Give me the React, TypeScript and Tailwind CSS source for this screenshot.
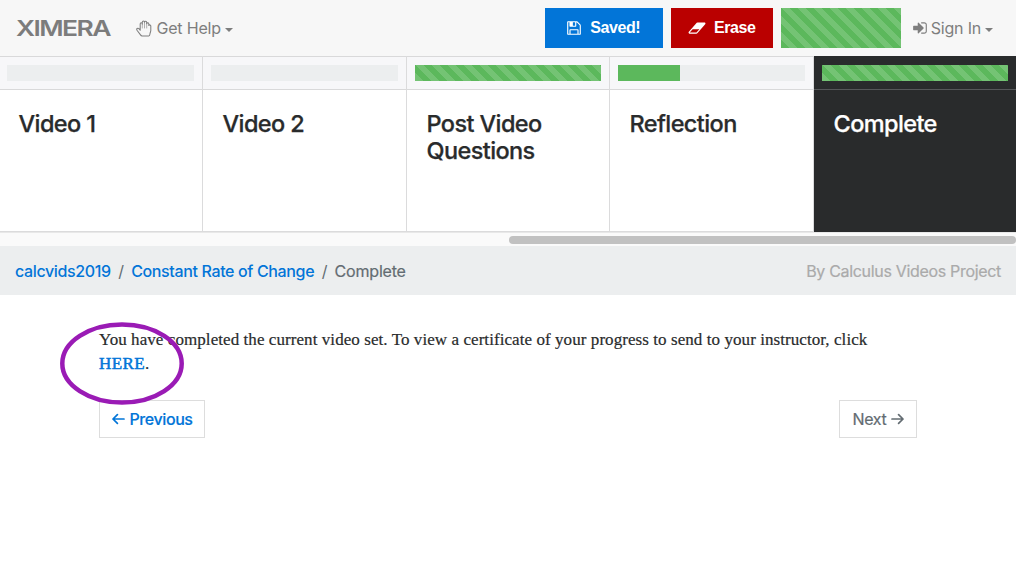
import type { ReactNode } from "react";

const stripes =
  "bg-[#5cb85c] bg-[linear-gradient(45deg,rgba(255,255,255,.15)_25%,transparent_25%,transparent_50%,rgba(255,255,255,.15)_50%,rgba(255,255,255,.15)_75%,transparent_75%,transparent)] bg-[length:16px_16px]";

function HandIcon() {
  return (
    <svg className="h-[17px] w-4" viewBox="0 0 16 17" fill="none" stroke="currentColor" strokeWidth="1.05" strokeLinejoin="round" strokeLinecap="round">
      <path d="M4.2 10.2V4.1c0-1.7 2-1.7 2.1 0V2.3c0-1.8 2.2-1.8 2.2 0 .1-1.6 2.2-1.5 2.2.3v1.1c.3-1.3 2.1-1.1 2.1.4v1.4c.5-1.1 2-.7 2 .6v4.4c0 .8-.5 1.8-.7 2.6-.2.7 0 2.8-1.3 2.8H6.1c-.8 0-1.2-.4-1.6-1L1 10.2c-.9-1.4.8-2.7 1.9-1.5l1.3 1.5" />
      <path strokeWidth=".6" d="M6.3 4v4M8.5 2.5V8M10.7 3.5V8" />
    </svg>
  );
}

function SaveIcon() {
  return (
    <svg className="size-4" viewBox="0 0 1792 1792" fill="currentColor">
      <path d="M512 1536h768v-384h-768v384zm896 0h128v-896q0-14-10-38.5t-20-34.5l-281-281q-10-10-34-20t-39-10v416q0 40-28 68t-68 28h-576q-40 0-68-28t-28-68v-416h-128v1280h128v-416q0-40 28-68t68-28h832q40 0 68 28t28 68v416zm-384-928v-320q0-13-9.5-22.5t-22.5-9.5h-192q-13 0-22.5 9.5t-9.5 22.5v320q0 13 9.5 22.5t22.5 9.5h192q13 0 22.5-9.5t9.5-22.5zm640 32v928q0 40-28 68t-68 28h-1344q-40 0-68-28t-28-68v-1344q0-40 28-68t68-28h928q40 0 88 20t76 48l280 280q28 28 48 76t20 88z" />
    </svg>
  );
}

function EraserIcon() {
  return (
    <svg className="h-4 w-[18px]" viewBox="0 0 2048 1792" fill="currentColor">
      <path d="M960 1408l336-384h-768l-336 384h768zm1013-1077q15 34 9.5 71.5t-30.5 65.5l-896 1024q-38 44-96 44h-768q-38 0-69.5-20.5t-47.5-54.5q-15-34-9.5-71.5t30.5-65.5l896-1024q38-44 96-44h768q38 0 69.5 20.5t47.5 54.5z" />
    </svg>
  );
}

function SignInIcon() {
  return (
    <svg className="size-4" viewBox="0 0 1792 1792" fill="currentColor">
      <path d="M1312 896q0 26-19 45l-544 544q-19 19-45 19t-45-19-19-45v-288h-448q-26 0-45-19t-19-45v-384q0-26 19-45t45-19h448v-288q0-26 19-45t45-19 45 19l544 544q19 19 19 45zm352-352v704q0 119-84.5 203.5t-203.5 84.5h-320q-13 0-22.5-9.5t-9.5-22.5q0-4-1-20t-.5-26.5 3-23.5 10-19.5 20.5-6.5h320q66 0 113-47t47-113v-704q0-66-47-113t-113-47h-312l-11.5-1-11.5-3-8-5.5-7-9-2-13.5q0-4-1-20t-.5-26.5 3-23.5 10-19.5 20.5-6.5h320q119 0 203.5 84.5t84.5 203.5z" />
    </svg>
  );
}

function Arrow({ flip = false }: { flip?: boolean }) {
  return (
    <svg className={flip ? "h-3 w-[13px] -scale-x-100" : "h-3 w-[13px]"} viewBox="0 0 13 12" fill="none" stroke="currentColor" strokeWidth="1.7" strokeLinecap="round" strokeLinejoin="round">
      <path d="M1 6h11M7.6 1.7 12 6l-4.4 4.3" />
    </svg>
  );
}

function Caret() {
  return <span className="mt-[3px] h-0 w-0 border-x-4 border-t-4 border-x-transparent border-t-current" />;
}

function Card({ title, percent, active = false }: { title: string; percent: number; active?: boolean }) {
  return (
    <div
      className={
        active
          ? "flex h-44 min-w-0 flex-col bg-[#292b2c] text-white"
          : "flex h-44 min-w-0 flex-col border-r border-b border-[#dbdbdc] bg-white text-[#292b2c]"
      }
    >
      <div className={active ? "h-[34px] border-b border-[#56585a] px-2 pt-[9px]" : "h-[34px] border-t border-b border-[#d9d9da] bg-[#f7f7f9] px-2 pt-2"}>
        <div className="h-4 bg-[#eceeef]">
          <div className={percent === 100 ? `h-4 ${stripes}` : "h-4 bg-[#5cb85c]"} style={{ width: `${percent}%` }} />
        </div>
      </div>
      <h4 className="pt-5 pr-5 pl-[19.5px] text-[23.5px] leading-[27px] font-medium tracking-[-0.6px] [-webkit-text-stroke:0.25px_currentColor]">{title}</h4>
    </div>
  );
}

function NavItem({ children }: { children: ReactNode }) {
  return <div className="flex items-center text-base text-[#7e7e7e]">{children}</div>;
}

export default function App() {
  return (
    <div className="h-[586px] w-[1016px] overflow-hidden bg-white font-['Inter','Liberation_Sans',sans-serif] text-base text-[#292b2c]">
      <nav className="flex h-14 items-center bg-[#f7f7f7]">
        <svg className="ml-4 h-9 w-24 overflow-visible text-[#7c7c7c]" viewBox="0 0 96 36" fill="currentColor" role="img">
          <text x="0" y="26" fontSize="22" fontWeight="600" letterSpacing="-1.3" textLength="94" lengthAdjust="spacingAndGlyphs">
            XIMERA
          </text>
        </svg>
        <div className="ml-6">
          <NavItem>
            <HandIcon />
            <span className="mr-1 ml-[4.5px] tracking-[-0.2px]">Get Help</span>
            <Caret />
          </NavItem>
        </div>
        <div className="ml-auto flex gap-2 font-['Liberation_Sans',sans-serif] font-bold text-white">
          <button className="flex h-10 w-[118px] items-center justify-center gap-2 bg-[#0275d8] pr-px">
            <SaveIcon />
            <span className="tracking-[-0.4px]">Saved!</span>
          </button>
          <button className="flex h-10 w-[102px] items-center justify-center gap-2 bg-[#ba0000]">
            <EraserIcon />
            <span className="tracking-[-0.4px]">Erase</span>
          </button>
          <div className={`h-10 w-[120px] ${stripes}`} />
        </div>
        <div className="mr-[23px] ml-[11px]">
          <NavItem>
            <SignInIcon />
            <span className="mr-1 ml-[3px] tracking-[-0.2px]">Sign In</span>
            <Caret />
          </NavItem>
        </div>
      </nav>

      <div className="h-[190px] bg-[#fafafa]">
        <div className="-ml-px grid grid-cols-[204px_204px_203px_204px_202px]">
          <Card title="Video 1" percent={0} />
          <Card title="Video 2" percent={0} />
          <Card title="Post Video Questions" percent={100} />
          <Card title="Reflection" percent={33} />
          <Card title="Complete" percent={100} active />
        </div>
        <div className="flex h-[14px] items-center justify-end border-t border-[#e8e8e8] pt-px">
          <div className="h-2 w-[507px] rounded-full bg-[#c1c1c1]" />
        </div>
      </div>

      <div className="flex h-[49px] items-center justify-between bg-[#eceeef] px-[15px]">
        <div className="flex items-center gap-[7.5px] tracking-[-0.36px]">
          <a className="font-medium text-[#0275d8]">calcvids2019</a>
          <span className="text-[#636c72]">/</span>
          <a className="font-medium text-[#0275d8]">Constant Rate of Change</a>
          <span className="text-[#636c72]">/</span>
          <span className="tracking-[-0.2px] text-[#636c72] [-webkit-text-stroke:0.2px_currentColor]">Complete</span>
        </div>
        <span className="tracking-[-0.32px] text-[#aaa] [-webkit-text-stroke:0.2px_currentColor]">By Calculus Videos Project</span>
      </div>

      <main className="relative px-[99px] pt-[33px]">
        <p className="font-['Liberation_Serif',serif] text-[17px] leading-6 tracking-[0.07px] whitespace-nowrap text-[#292b2c] [-webkit-text-stroke:0.2px_currentColor]">
          You have completed the current video set. To view a certificate of your progress to send to your instructor, click
          <br />
          <a className="tracking-[0.4px] text-[#0275d8] [-webkit-text-stroke:0.5px_currentColor]">HERE</a>.
        </p>
        <div className="mt-6 flex justify-between">
          <a className="flex h-[38px] w-[106px] items-center justify-center gap-1 border border-[#ddd] pl-px font-medium tracking-[-0.4px] text-[#0275d8] [-webkit-text-stroke:0.15px_currentColor]">
            <Arrow flip />
            Previous
          </a>
          <a className="flex h-[38px] w-[78px] items-center justify-center gap-1 border border-[#ddd] tracking-[-0.3px] text-[#636c72] [-webkit-text-stroke:0.2px_currentColor]">
            Next
            <Arrow />
          </a>
        </div>
        <svg className="absolute top-[26px] left-[59px] h-[86px] w-[126px]" viewBox="0 0 126 86" fill="none">
          <ellipse cx="63" cy="42.5" rx="59.7" ry="39" stroke="#9a1bb5" strokeWidth="4.5" />
        </svg>
      </main>
    </div>
  );
}
